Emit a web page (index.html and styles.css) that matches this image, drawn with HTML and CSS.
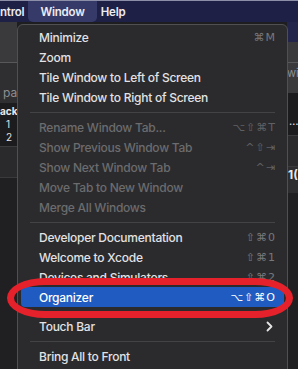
FILE: index.html
```
<!DOCTYPE html>
<html lang="en">
  <head>
    <meta charset="UTF-8" />
    <meta name="viewport" content="width=device-width, initial-scale=1.0" />
    <title>Window menu</title>
    <link rel="stylesheet" href="styles.css">
  </head>

  <body>
    <div class="screen">
      <div class="menubar">
        <span class="menutitle cut">ntrol</span>
        <span class="menutitle active">Window</span>
        <span class="menutitle">Help</span>
      </div>

      <div class="desk">
        <div class="pane left">
          <div class="band toolbar"></div>
          <div class="band tabs"><span class="dim">pa</span></div>
          <div class="band list">
            <span class="bold">ack</span>
            <span class="num">1</span>
            <span class="num">2</span>
          </div>
          <div class="band strip"></div>
          <div class="band rest"></div>
        </div>
        <div class="pane middle"></div>
        <div class="pane right">
          <div class="band topnavy"></div>
          <div class="band toolbar short"></div>
          <div class="band tabs short"><span class="dim">wi</span></div>
          <div class="band list short"><span class="dots">…</span></div>
          <div class="band strip"></div>
          <div class="band numrow"><span class="bold">1(</span></div>
          <div class="band rest"></div>
        </div>
      </div>

      <div class="menu">
        <div class="item"><span>Minimize</span><span class="keys">⌘M</span></div>
        <div class="item"><span>Zoom</span></div>
        <div class="item"><span>Tile Window to Left of Screen</span></div>
        <div class="item"><span>Tile Window to Right of Screen</span></div>
        <div class="sep"></div>
        <div class="item off"><span>Rename Window Tab...</span><span class="keys">⌥⇧⌘T</span></div>
        <div class="item off"><span>Show Previous Window Tab</span><span class="keys">^⇧⇥</span></div>
        <div class="item off"><span>Show Next Window Tab</span><span class="keys">^⇥</span></div>
        <div class="item off"><span>Move Tab to New Window</span></div>
        <div class="item off"><span>Merge All Windows</span></div>
        <div class="sep"></div>
        <div class="item"><span>Developer Documentation</span><span class="keys">⇧⌘0</span></div>
        <div class="item"><span>Welcome to Xcode</span><span class="keys">⇧⌘1</span></div>
        <div class="item"><span>Devices and Simulators</span><span class="keys">⇧⌘2</span></div>
        <div class="item on"><span>Organizer</span><span class="keys">⌥⇧⌘O</span></div>
        <div class="item gap">
          <span>Touch Bar</span>
          <svg class="chevron" width="7" height="11" viewBox="0 0 7 11">
            <path d="M1.5 1.5 L5.5 5.5 L1.5 9.5" fill="none" stroke="#e6e6e6" stroke-width="1.8" stroke-linecap="round" stroke-linejoin="round" />
          </svg>
        </div>
        <div class="sep"></div>
        <div class="item"><span>Bring All to Front</span></div>
      </div>

      <div class="ring"></div>
    </div>
  </body>
</html>
```

FILE: styles.css
```
body {
  margin: 0;
  background: #1e1e20;
}

.screen {
  position: relative;
  width: 298px;
  height: 369px;
  overflow: hidden;
  font-family: "Inter", "Liberation Sans", sans-serif;
}

.menubar {
  height: 22px;
  display: flex;
  align-items: stretch;
  background: #1f2046;
  border-top: 1px solid #8d8fa8;
  box-sizing: border-box;
  color: #ececf2;
  font-size: 11.5px;
  font-weight: 600;
  letter-spacing: -0.2px;
}

.menutitle {
  display: flex;
  align-items: center;
  padding: 0 4px;
}

.menutitle.cut {
  padding: 0 4px 0 0;
}

.menutitle.active {
  padding: 0 12px;
  background: #353a68;
  border-radius: 0 0 5px 5px;
}

.desk {
  display: flex;
  height: 347px;
}

.pane {
  display: flex;
  flex-direction: column;
}

.pane.left {
  width: 17px;
}

.pane.middle {
  flex: 1;
  background: #1e1e20;
}

.pane.right {
  width: 11px;
}

.band {
  box-sizing: border-box;
  overflow: hidden;
  white-space: nowrap;
  font-size: 12px;
}

.toolbar {
  height: 41px;
  background: #3a3a3c;
  border-bottom: 1px solid #58585a;
}

.toolbar.short {
  height: 21px;
}

.topnavy {
  height: 20px;
  background: #23254a;
}

.tabs {
  height: 40px;
  background: #2f2f31;
  padding: 22px 0 0 3px;
}

.tabs.short {
  height: 30px;
  background: #3a3a3c;
  padding: 3px 0 0 0;
  font-size: 11px;
}

.list {
  height: 44px;
  background: #1c1c1e;
  border-bottom: 1px solid #3c3c3e;
  display: flex;
  flex-direction: column;
  font-size: 10px;
  line-height: 13px;
  padding-top: 2px;
}

.list.short {
  height: 43px;
  padding: 22px 0 0 2px;
}

.strip {
  height: 31px;
  background: #2a2a2c;
  border-bottom: 1px solid #3a3a3c;
}

.numrow {
  height: 26px;
  background: #2e2e30;
  padding: 0 0 0 1px;
}

.rest {
  flex: 1;
  background: #202022;
}

.dim {
  color: #8e8e92;
}

.bold {
  color: #e8e8ea;
  font-weight: 700;
}

.num {
  color: #e0e0e2;
  padding-left: 6px;
}

.dots {
  color: #e0e0e2;
  font-size: 11px;
}

.menu {
  position: absolute;
  top: 24px;
  left: 17px;
  width: 271px;
  height: 360px;
  box-sizing: border-box;
  padding: 2px 3px;
  background: #2b2b2d;
  border: 1px solid #505052;
  border-radius: 6px;
  color: #e2e2e4;
  font-size: 12px;
  font-weight: 500;
  letter-spacing: -0.25px;
}

.item {
  height: 20px;
  display: flex;
  align-items: center;
  justify-content: space-between;
  padding: 0 8px 0 18px;
  border-radius: 4px;
}

.item.off {
  color: #6c6c6e;
}

.item.on {
  background: #1f5bc0;
  color: #ffffff;
}

.item.gap {
  margin-top: 9px;
}

.keys {
  font-family: "DejaVu Sans", sans-serif;
  font-size: 11px;
  color: #77777a;
  letter-spacing: 1px;
}

.item.off .keys {
  color: #606063;
}

.item.on .keys {
  color: #ffffff;
}

.chevron {
  margin-right: 3px;
}

.sep {
  height: 10px;
  display: flex;
  align-items: center;
  padding: 0 9px;
}

.sep::after {
  content: "";
  flex: 1;
  height: 1px;
  background: #434345;
}

.ring {
  position: absolute;
  top: 278px;
  left: 7px;
  width: 286px;
  height: 40px;
  box-sizing: border-box;
  border: 7px solid #e5222b;
  border-radius: 38px / 50%;
}
```
